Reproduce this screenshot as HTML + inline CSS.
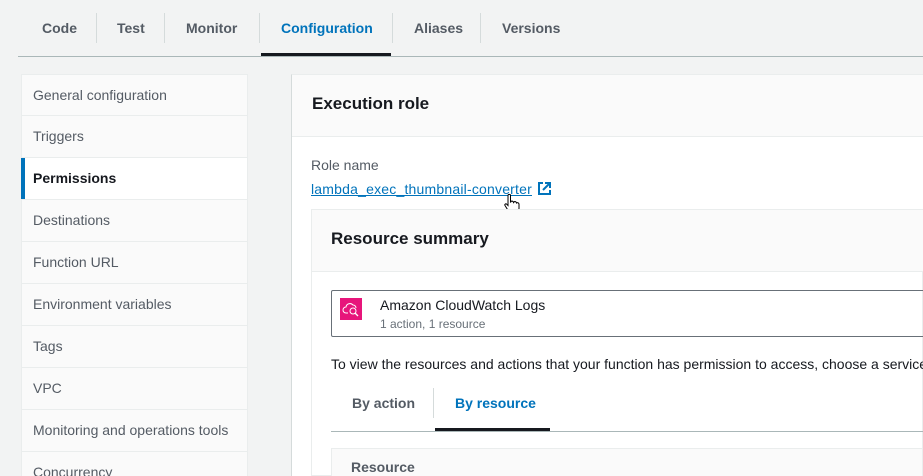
<!DOCTYPE html><html><head><style>
*{box-sizing:border-box;margin:0;padding:0}
html{width:923px;height:476px;overflow:hidden}
body{width:923px;height:476px;overflow:hidden;background:#f2f3f3;font-family:"Liberation Sans",sans-serif;font-size:14px;color:#16191f;position:relative}
.a{position:absolute;white-space:nowrap}
.tab{position:absolute;top:20px;font-weight:bold;color:#545b64;font-size:14px}
.sep{position:absolute;top:13px;width:1px;height:30px;background:#d5dbdb}
.nav{position:absolute;left:21px;width:227px;height:42px;background:#fafafa;border-bottom:1px solid #eaeded;border-left:1px solid #eaeded;border-right:1px solid #eaeded;color:#545b64;padding:12px 0 0 11px}
</style></head><body>
<div class="tab" style="left:42px">Code</div><div class="sep" style="left:96px"></div>
<div class="tab" style="left:117px">Test</div><div class="sep" style="left:164px"></div>
<div class="tab" style="left:186px">Monitor</div><div class="sep" style="left:259px"></div>
<div class="tab" style="left:281px;color:#0073bb">Configuration</div><div class="sep" style="left:392px"></div>
<div class="tab" style="left:414px">Aliases</div><div class="sep" style="left:480px"></div>
<div class="tab" style="left:502px">Versions</div>
<div class="a" style="left:18px;top:56px;width:905px;height:1px;background:#aab7b8"></div>
<div class="a" style="left:261px;top:53px;width:130px;height:3px;background:#16191f"></div>

<div class="nav" style="top:74px;border-top:1px solid #eaeded">General configuration</div>
<div class="nav" style="top:116px">Triggers</div>
<div class="nav" style="top:158px;background:#fff;color:#16191f;font-weight:bold"><div class="a" style="left:-1px;top:0;width:4px;height:41px;background:#0073bb"></div>Permissions</div>
<div class="nav" style="top:200px">Destinations</div>
<div class="nav" style="top:242px">Function URL</div>
<div class="nav" style="top:284px">Environment variables</div>
<div class="nav" style="top:326px">Tags</div>
<div class="nav" style="top:368px">VPC</div>
<div class="nav" style="top:410px">Monitoring and operations tools</div>
<div class="nav" style="top:452px">Concurrency</div>

<div class="a" style="left:291px;top:74px;width:632px;height:402px;background:#fff;border-left:1px solid #d5dbdb;border-top:1px solid #eaeded"></div>
<div class="a" style="left:292px;top:75px;width:631px;height:62px;background:#fafafa;border-bottom:1px solid #eaeded"></div>
<div class="a" style="left:312px;top:94px;font-size:17px;font-weight:bold">Execution role</div>
<div class="a" style="left:311px;top:157px;color:#545b64">Role name</div>
<div class="a" style="left:311px;top:181px;color:#0073bb;text-decoration:underline;letter-spacing:0.2px">lambda_exec_thumbnail-converter</div>
<svg class="a" style="left:537px;top:181px" width="15" height="15" viewBox="0 0 15 15"><path d="M6 2H2v11h11V9M8 2h5v5M13 2L6 9" fill="none" stroke="#0073bb" stroke-width="2"/></svg>
<svg class="a" style="left:503px;top:193px" width="18" height="23" viewBox="0 0 18 22"><path d="M5 2c0-1.5 2.5-1.5 2.5 0v7l.5-1c1-1 2.5 0 2.5 1l.5-.5c1-1 2.5 0 2.5 1l.3-.2c1-.5 2.2.3 2.2 1.5v4c0 3-2 5-5 5H9c-2 0-3-1-4-3L2 12c-.7-1 .7-2.3 1.7-1.3L5 12z" fill="#fff" stroke="#000" stroke-width="1"/></svg>

<div class="a" style="left:311px;top:209px;width:612px;height:267px;border:1px solid #eaeded;background:#fff"></div>
<div class="a" style="left:312px;top:210px;width:611px;height:62px;background:#fafafa;border-bottom:1px solid #eaeded"></div>
<div class="a" style="left:331px;top:229px;font-size:17px;font-weight:bold">Resource summary</div>
<div class="a" style="left:331px;top:290px;width:600px;height:47px;border:1px solid #687078;border-radius:2px"></div>
<div class="a" style="left:340px;top:298px;width:22px;height:22px;background:#e7157b"></div>
<svg class="a" style="left:340px;top:298px" width="22" height="22" viewBox="0 0 22 22"><path d="M8 15H6a3 3 0 010-6 4 4 0 017-2 3 3 0 013 3" fill="none" stroke="#fff" stroke-width="1"/><circle cx="13" cy="13" r="3" fill="none" stroke="#fff"/><path d="M15 15l3 3" stroke="#fff" stroke-width="1.3"/></svg>
<div class="a" style="left:380px;top:297px">Amazon CloudWatch Logs</div>
<div class="a" style="left:380px;top:317px;font-size:12px;color:#687078">1 action, 1 resource</div>
<div class="a" style="left:331px;top:356px">To view the resources and actions that your function has permission to access, choose a service</div>
<div class="a" style="left:352px;top:395px;font-weight:bold;color:#545b64">By action</div>
<div class="a" style="left:433px;top:388px;width:1px;height:30px;background:#d5dbdb"></div>
<div class="a" style="left:455px;top:395px;font-weight:bold;color:#0073bb">By resource</div>
<div class="a" style="left:331px;top:431px;width:592px;height:1px;background:#aab7b8"></div>
<div class="a" style="left:435px;top:428px;width:115px;height:3px;background:#16191f"></div>
<div class="a" style="left:331px;top:448px;width:592px;height:30px;background:#fafafa;border:1px solid #eaeded"></div>
<div class="a" style="left:351px;top:459px;font-weight:bold;color:#545b64">Resource</div>
</body></html>
